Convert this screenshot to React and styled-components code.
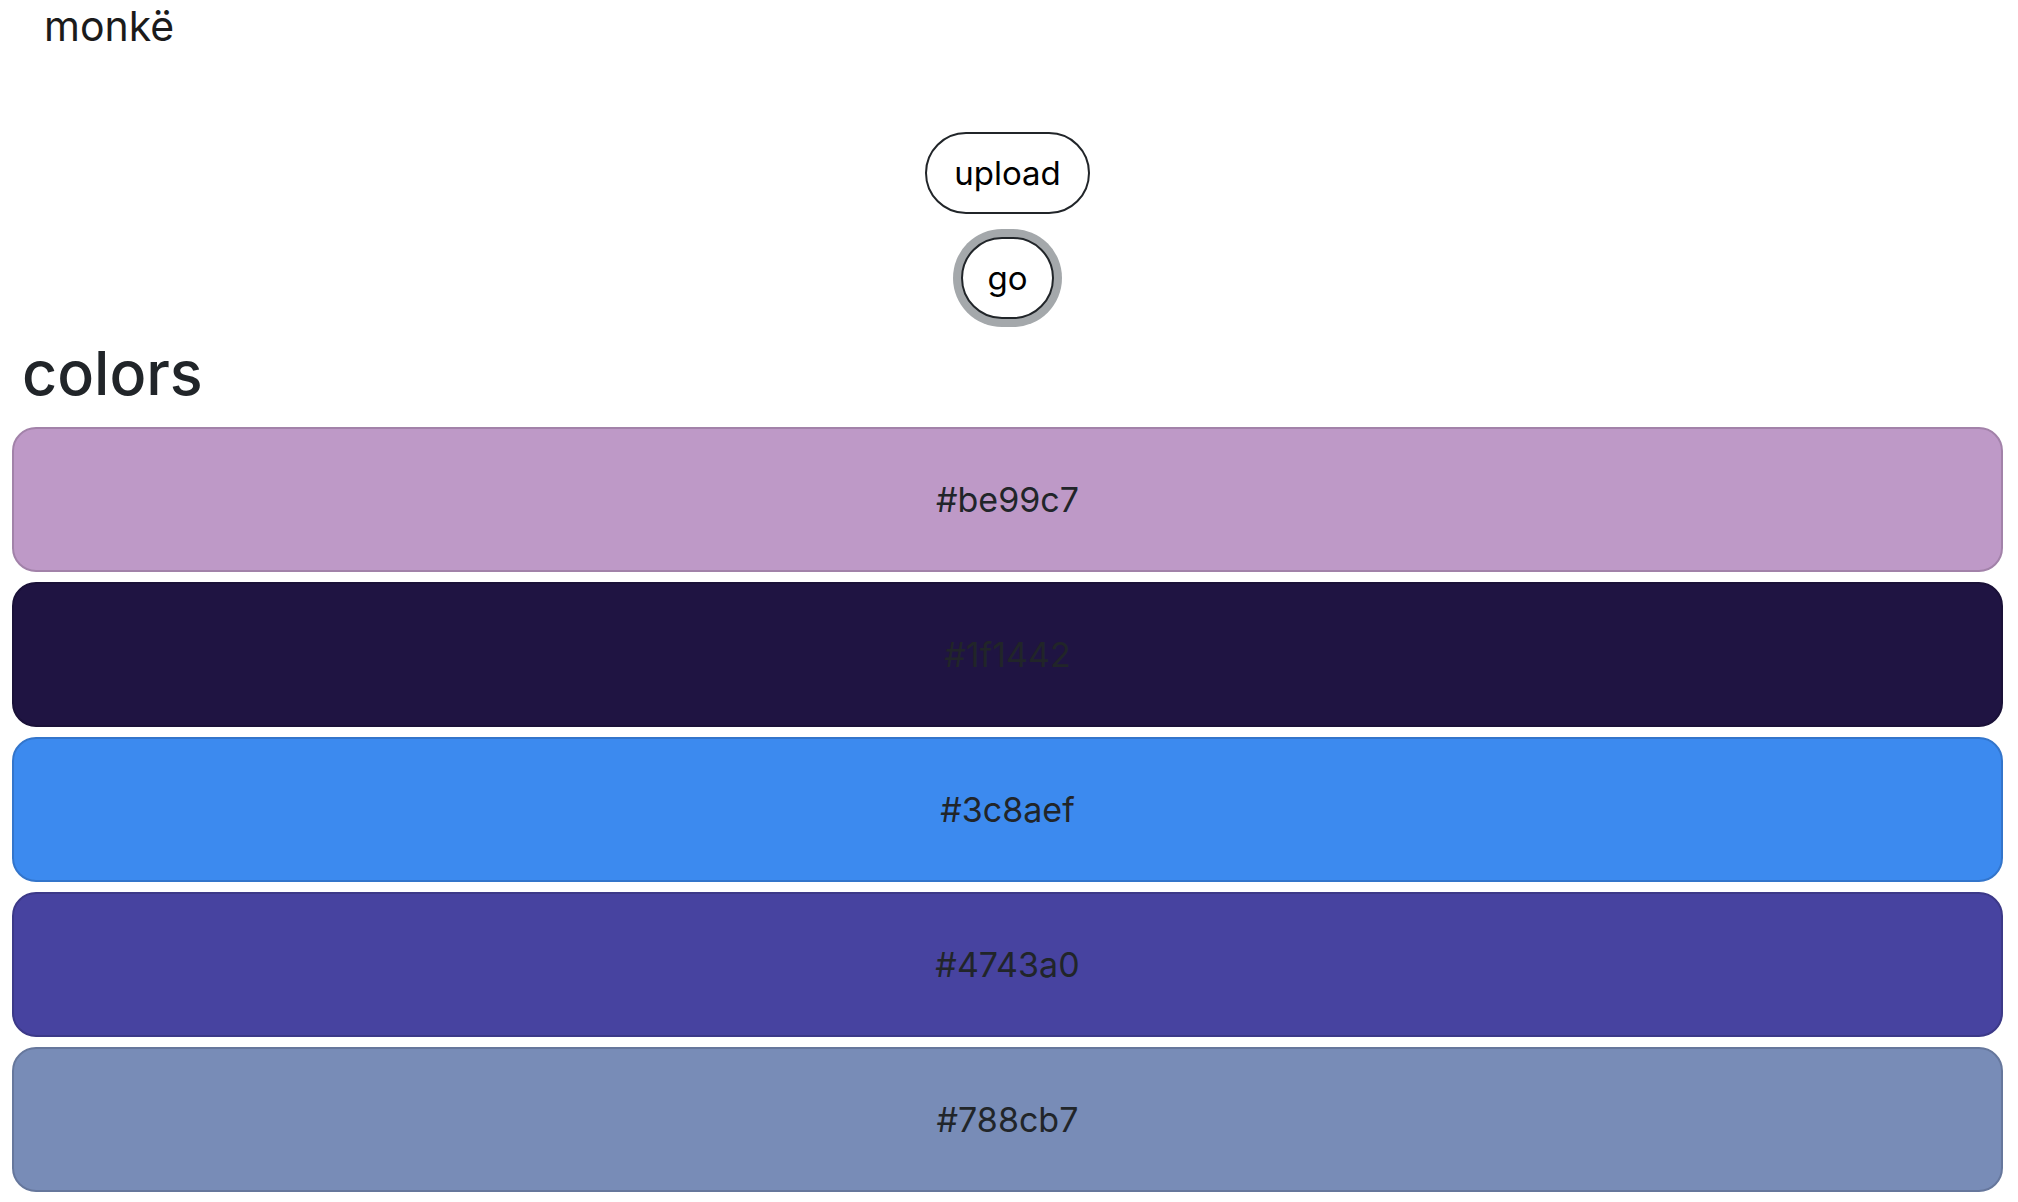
import React from "react";
import styled, { createGlobalStyle } from "styled-components";

const Global = createGlobalStyle`
  html, body { margin: 0; padding: 0; background: #ffffff; }
  body {
    font-family: Inter, "Noto Sans", "Liberation Sans", sans-serif;
    color: #212529;
    font-size: 32px;
    line-height: 1.5;
  }
  * { box-sizing: border-box; }
`;

const Page = styled.div`
  display: flex;
  flex-direction: column;
  padding: 0 15px 0 12px;
`;

const Brand = styled.div`
  font-size: 41px;
  line-height: 40px;
  font-weight: 400;
  color: #1b1b1b;
  padding: 6px 0 0 32px;
`;

const Actions = styled.div`
  display: flex;
  flex-direction: column;
  align-items: center;
  gap: 23px;
  margin-top: 86px;
`;

const PillButton = styled.button`
  font-family: inherit;
  font-size: 33px;
  line-height: 48px;
  color: #000;
  background: #fff;
  border: 2px solid #212529;
  border-radius: 999px;
  padding: 15px 27px;
  cursor: pointer;
  box-shadow: ${(p) => (p.$focused ? "0 0 0 8px #a4a8ab" : "none")};
  ${(p) => p.$focused && "padding-left: 24px; padding-right: 24px;"}
`;

const Heading = styled.h2`
  font-size: 61px;
  font-weight: 500;
  line-height: 1.2;
  margin: 18px 0 17px 10px;
  color: #212529;
`;

const Swatches = styled.div`
  display: flex;
  flex-direction: column;
  gap: 10px;
`;

const Swatch = styled.div`
  height: 145px;
  border-radius: 24px;
  background: ${(p) => p.$color};
  border: 2px solid color-mix(in srgb, ${(p) => p.$color} 85%, #000);
  display: flex;
  align-items: center;
  justify-content: center;
  font-size: 34px;
  color: #212529;
`;

const colors = ["#be99c7", "#1f1442", "#3c8aef", "#4743a0", "#788cb7"];

export default function App() {
  return (
    <>
      <Global />
      <Page>
        <Brand>monkë</Brand>
        <Actions>
          <PillButton>upload</PillButton>
          <PillButton $focused>go</PillButton>
        </Actions>
        <Heading>colors</Heading>
        <Swatches>
          {colors.map((c) => (
            <Swatch key={c} $color={c}>
              {c}
            </Swatch>
          ))}
        </Swatches>
      </Page>
    </>
  );
}
